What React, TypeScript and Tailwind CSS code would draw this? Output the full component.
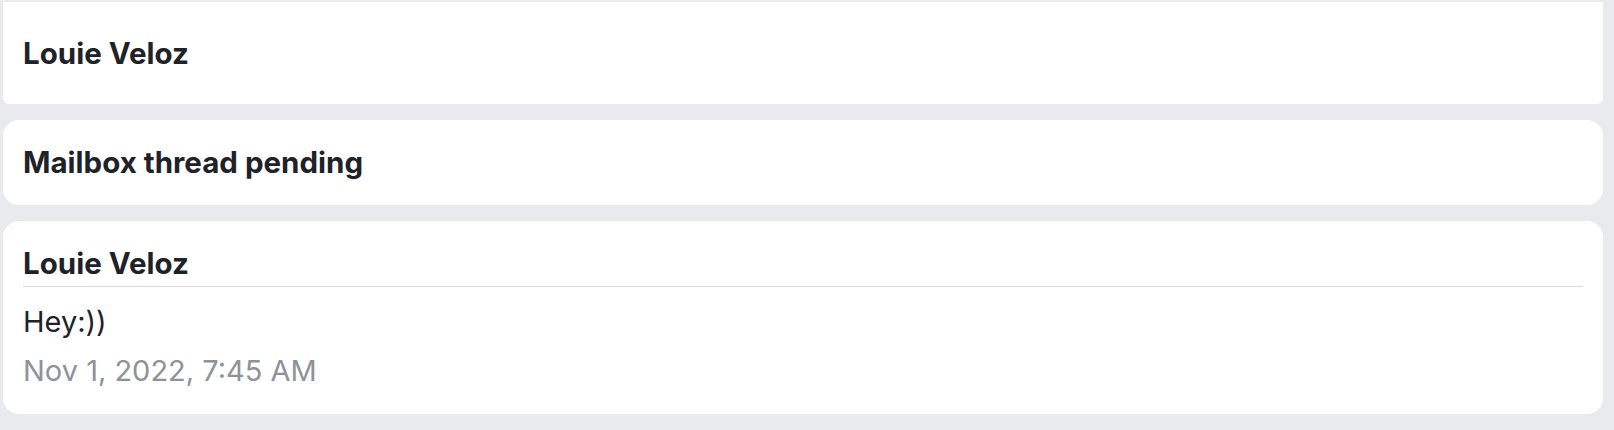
import React from "react";

const font = { fontFamily: "Inter, 'Liberation Sans', sans-serif" };

export default function App() {
  return (
    <div
      className="min-h-screen bg-[#e9eaee] pl-[3px] pr-[11px] pt-[2px] pb-4 flex flex-col gap-4 text-[#1f2228]"
      style={font}
    >
      <div className="bg-white rounded-b-md h-[102px] px-5 flex items-center">
        <div className="text-[29.5px] leading-9 font-bold">Louie Veloz</div>
      </div>

      <div className="bg-white rounded-2xl px-5 pt-6 pb-[25px]">
        <div className="text-[29.5px] leading-9 font-bold">Mailbox thread pending</div>
      </div>

      <div className="bg-white rounded-2xl px-5 pt-6 pb-[25px]">
        <div className="text-[29.5px] leading-9 font-bold pb-[5px] border-b-[1.5px] border-[#d8d8dd]">
          Louie Veloz
        </div>
        <div className="text-[29px] leading-9 mt-[17px]">Hey:))</div>
        <div className="text-[29px] leading-9 mt-[13px] text-[#8d929b]">Nov 1, 2022, 7:45 AM</div>
      </div>
    </div>
  );
}
